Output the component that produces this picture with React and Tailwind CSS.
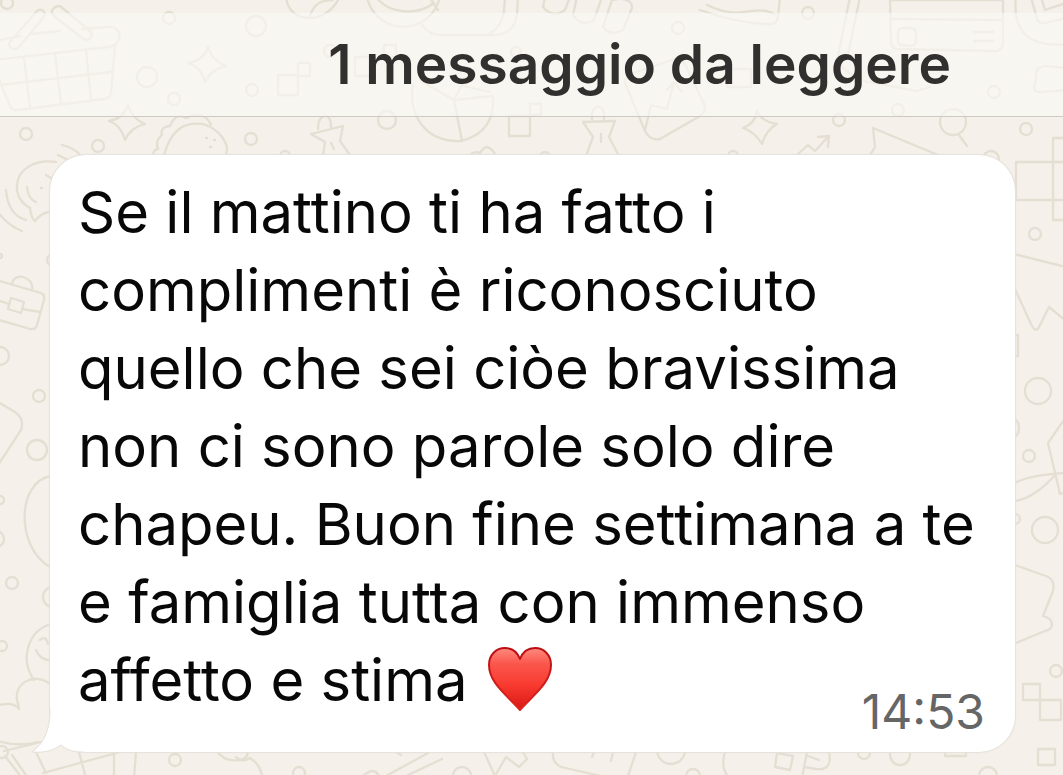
const dots = [
  [7, 3, 6], [169, 18, 6], [256, 26, 10], [147, 77, 10], [174, 99, 6], [252, 90, 6],
  [330, 51, 6], [26, 134, 6], [98, 146, 6], [251, 139, 6], [387, 120, 9], [516, 52, 5],
  [678, 28, 6], [808, 13, 6], [994, 92, 6], [898, 110, 6], [839, 120, 6], [1026, 129, 6],
  [953, 122, 13], [991, 159, 8], [0, 256, 2], [0, 356, 9], [39, 396, 6], [37, 450, 10],
  [0, 500, 4], [-4, 539, 8], [12, 583, 6], [53, 597, 10], [2, 646, 5], [2, 752, 6],
  [175, 760, 6], [299, 773, 6], [462, 776, 9], [671, 750, 14], [693, 776, 7],
  [864, 753, 6], [900, 755, 10], [988, 776, 9], [1035, 234, 6], [1038, 391, 13],
  [1029, 456, 6], [1045, 530, 13], [1015, 519, 5], [1056, 671, 6], [53, 260, 6],
  [285, 156, 5], [733, 156, 5], [545, 157, 5], [1006, 428, 13],
];

const boxes = [
  [278, 75, 20, 20], [298, 63, 12, 13], [355, 57, 20, 19], [384, 45, 12, 12],
  [509, 116, 21, 20], [530, 104, 11, 11], [727, 69, 24, 18], [1023, 684, 17, 16],
  [1040, 700, 21, 20], [1038, 749, 17, 16], [945, 744, 21, 12], [1006, 335, 12, 21],
  [1053, 138, 40, 82], [1016, 162, 60, 38],
];

const strokes = [
  // basket
  "M-6 41 L20 36 M31 34 L60 31 M82 29 L108 27 C124 26 123 46 108 47 L-6 60",
  "M10 42 L36 12 C41 6 48 13 43 18 L19 47 C14 52 7 47 10 42Z",
  "M60 6 C54 6 49 11 54 16 L82 38 C88 43 95 36 90 31Z",
  "M115 46 L111 93 Q110 98 104 99 L18 110 Q13 111 10 106 L-2 77 M0 85 L111 72 M24 58 L30 107 M55 54 L61 103 M86 50 L91 100",
  // sparkles
  "M208 47 Q212 61 226 66 Q211 69 205 82 Q201 67 188 63 Q203 61 208 47Z",
  "M128 105 Q132 119 145 124 Q131 127 125 140 Q121 125 109 121 Q123 119 128 105Z",
  "M757 111 Q762 122 777 124 Q766 130 762 144 Q755 132 743 128 Q755 124 757 111Z",
  // ball and coin
  "M286 -4 C288 26 328 25 340 -4 M310 16 C314 3 322 0 333 0",
  "M367 -2 C377 36 430 37 440 -3 M376 -3 C389 14 417 16 434 3 M430 -2 L438 10",
  "M422 25 Q429 35 441 35 L493 35 Q514 35 517 15 L518 -3 M489 34 Q501 28 504 12 L505 -3",
  // keys
  "M545 -3 L543 7 Q553 19 565 10 L570 -3 M577 -3 L573 15 Q582 28 594 20 L602 -3",
  "M612 0 L603 27 Q611 37 623 30 L632 8 Q632 -2 617 -1Z",
  // shoe
  "M700 10 Q740 24 770 24 Q777 24 778 17 L780 -3 M707 5 Q728 15 744 12 Q765 8 774 14",
  // pen
  "M850 -3 L837 61 M860 -3 L847 59 M837 61 Q844 70 854 76 M864 81 L917 91 L930 87",
  // card
  "M890 0 L1003 0 L1003 44 Q1002 52 994 51 L897 49 Q891 48 891 42Z M892 19 L1003 20",
  "M903 28 L911 28 Q916 28 916 34 L916 40 Q916 46 910 46 L902 45 Q898 45 898 40 L898 33 Q898 28 903 28Z M974 32 L993 32 M974 41 L993 41",
  "M1016 -3 C1012 32 1030 48 1066 44 M1031 -3 L1037 19 Q1039 24 1045 23 L1066 18 M1041 -3 L1045 10 L1066 3",
  "M1067 68 L1044 66 Q1035 68 1036 77 L1034 88 Q1035 93 1042 92 L1067 90",
  // taco
  "M152 156 C155 149 156 149 158 149 C155 141 159 138 162 135 C160 129 165 126 170 126 C174 116 180 114 186 118 C197 112 207 115 211 125",
  "M164 155 C171 130 183 122 203 124 C220 129 230 145 226 154 M206 138 h1 M214 140 h1 M210 147 h1",
  "M62 145 Q75 148 81 156 M58 155 L68 160",
  // push pins
  "M318 129 C317 113 332 111 331 127 M311 134 L343 126 L340 141 L350 155 M311 134 L325 142 L323 156 M331 143 L334 149",
  "M592 119 C590 103 606 102 604 119 M583 122 L615 121 L609 137 L619 156 M583 122 L593 137 L586 156 M601 134 L601 142",
  // pie chart
  "M413 84 C408 115 425 142 460 141 C485 136 495 118 493 96 L454 100 L421 81 M454 100 L462 141 M464 86 L490 92 M454 99 L466 78",
  "M471 154 Q476 151 480 153 Q487 141 495 154",
  // photo tile
  "M625 83 L645 131 Q650 141 660 139 L700 116 Q707 112 704 104 L686 66 Q681 57 672 60 L633 73 Q624 76 625 83Z M645 130 L651 105 L667 109 L674 82 L682 92 M674 82 L667 90",
  // trend arrow
  "M797 155 L808 145 L815 151 L828 137 M818 137 L829 136 L828 147",
  "M870 155 L875 147 L873 128 L938 155 M959 135 L967 146",
  // speech and waves
  "M56 162 C35 159 18 169 17 185 C16 198 23 204 30 208 Q31 218 35 221 Q41 213 49 212",
  "M27 187 Q28 199 36 202 M46 175 L51 178 M6 190 Q8 215 26 220 M-3 211 Q8 226 22 231 M41 188 h1",
  // briefcase
  "M-4 280 L41 293 Q45 294 44 300 L37 325 Q36 330 30 329 L-4 319 M-3 300 L9 304 M22 309 L40 312 M11 298 L24 302 L21 313 L8 309Z M12 284 C14 271 35 277 32 290",
  "M-2 402 L15 412 Q25 419 21 430 L0 462",
  // balloon and cloud
  "M51 476 C16 482 16 548 50 567",
  "M51 624 C27 631 20 660 34 680 M36 650 Q40 660 50 660 M40 640 Q46 635 48 644",
  "M50 684 C34 671 11 684 18 704 L19 709 C13 700 -1 706 -3 705 M-2 741 Q18 747 38 742",
  "M4 751 L41 742 M5 756 L22 778 M12 755 L28 778 M35 750 L46 773 M43 773 L120 752 M79 752 L86 778 M114 752 L114 778 M136 752 L134 778",
  "M216 750 Q224 762 238 760 Q248 760 248 750 M236 757 Q242 763 250 758 Q260 764 262 776",
  "M386 776 L428 753 M406 776 L442 759 M396 752 L401 755 M363 776 Q374 766 379 776",
  "M484 752 L495 776 L506 757 L519 767 L527 759 L523 752",
  "M553 752 Q552 763 561 767 L601 776 M594 752 L592 757 M613 752 L611 761 M636 752 L628 776",
  "M725 752 Q720 767 729 778 M777 753 L793 756 L790 770 L775 767Z M807 752 L802 778 M829 752 Q833 771 816 769 L804 767 M808 756 L819 760",
  "M1014 254 L1066 267 M1015 289 L1031 324 Q1036 335 1040 325 L1049 307 L1066 321",
  "M1066 417 L1048 443 L1060 494 L1067 492 M1015 483 Q1029 475 1066 473 M1015 501 Q1035 498 1056 474",
  "M1015 565 L1043 575 Q1056 578 1053 591 L1043 616 Q1052 618 1052 625 Q1051 630 1045 631 L1016 643",
];

function Wallpaper() {
  return (
    <svg
      aria-hidden="true"
      className="absolute inset-0 h-full w-full"
      viewBox="0 0 1063 775"
      preserveAspectRatio="xMidYMid slice"
      fill="none"
      stroke="#e4dfd2"
      strokeWidth="2.3"
      strokeLinecap="round"
      strokeLinejoin="round"
    >
      {dots.map(([x, y, r]) => (
        <circle key={`${x}-${y}`} cx={x} cy={y} r={r} />
      ))}
      {boxes.map(([x, y, w, h]) => (
        <rect key={`${x}-${y}`} x={x} y={y} width={w} height={h} />
      ))}
      {strokes.map((d) => (
        <path key={d} d={d} />
      ))}
    </svg>
  );
}

function Heart() {
  return (
    <svg role="img" aria-label="cuore rosso" viewBox="0 0 64 64" className="ml-1 inline-block size-16 align-[-10px]">
      <defs>
        <linearGradient id="heart-fill" x1="0" y1="0" x2="0" y2="1">
          <stop offset="0" stopColor="#ff8a80" />
          <stop offset="0.25" stopColor="#fb574d" />
          <stop offset="0.6" stopColor="#f83a30" />
          <stop offset="1" stopColor="#d91714" />
        </linearGradient>
        <linearGradient id="heart-edge" x1="0" y1="0" x2="0" y2="1">
          <stop offset="0" stopColor="#b80f12" />
          <stop offset="1" stopColor="#e0251f" />
        </linearGradient>
      </defs>
      <path
        d="M32 12 C29 4 23 1 17 1 C8 1 1 8 1 18 C1 36 19 48 32 63 C45 48 63 36 63 18 C63 8 56 1 47 1 C41 1 35 4 32 12Z"
        fill="url(#heart-fill)"
        stroke="url(#heart-edge)"
        strokeWidth="2"
        strokeLinejoin="round"
      />
    </svg>
  );
}

function Tail() {
  return (
    <svg aria-hidden="true" viewBox="0 0 50 44" className="absolute -bottom-px -left-[18px] h-11 w-[50px]">
      <path d="M18 0 C18 23 11 35 0 43 C11 44 21 42 29 36 C35 41 41 43 50 43 V0Z" fill="#fff" />
      <path d="M18 0 C18 23 11 35 0 43 C11 44 21 42 29 36 C35 41 41 43 50 43" fill="none" stroke="#e4e1da" strokeWidth="1" />
    </svg>
  );
}

export default function App() {
  return (
    <main className="relative min-h-screen overflow-hidden bg-[#f5f0e9] pt-[13px] font-['Inter','Liberation_Sans',sans-serif]">
      <Wallpaper />
      <header className="relative flex h-26 items-center justify-end border-b border-[#cbcac5] bg-[#fafaf7]/60 pr-28 pb-0.5">
        <h1 className="text-[55px] leading-[64px] font-semibold whitespace-nowrap text-[#31302e]">
          1 messaggio da leggere
        </h1>
      </header>
      <article className="relative mt-[38px] mr-12 mb-[23px] ml-[50px] rounded-[36px] bg-white pt-[18px] pr-[30px] pb-3 pl-7 shadow-[0_0_1px_1px_#e4e1da]">
        <Tail />
        <p className="relative text-[58px] leading-[78px] whitespace-nowrap text-[#080808]">
          Se il mattino ti ha fatto i<br />
          complimenti è riconosciuto<br />
          quello che sei ciòe bravissima<br />
          non ci sono parole solo dire<br />
          chapeu. Buon fine settimana a te<br />
          e famiglia tutta con immenso<br />
          affetto e stima <Heart />
        </p>
        <time dateTime="14:53" className="relative -mt-[35px] block text-right text-[48px] leading-[56px] text-[#666]">
          14:53
        </time>
      </article>
    </main>
  );
}
